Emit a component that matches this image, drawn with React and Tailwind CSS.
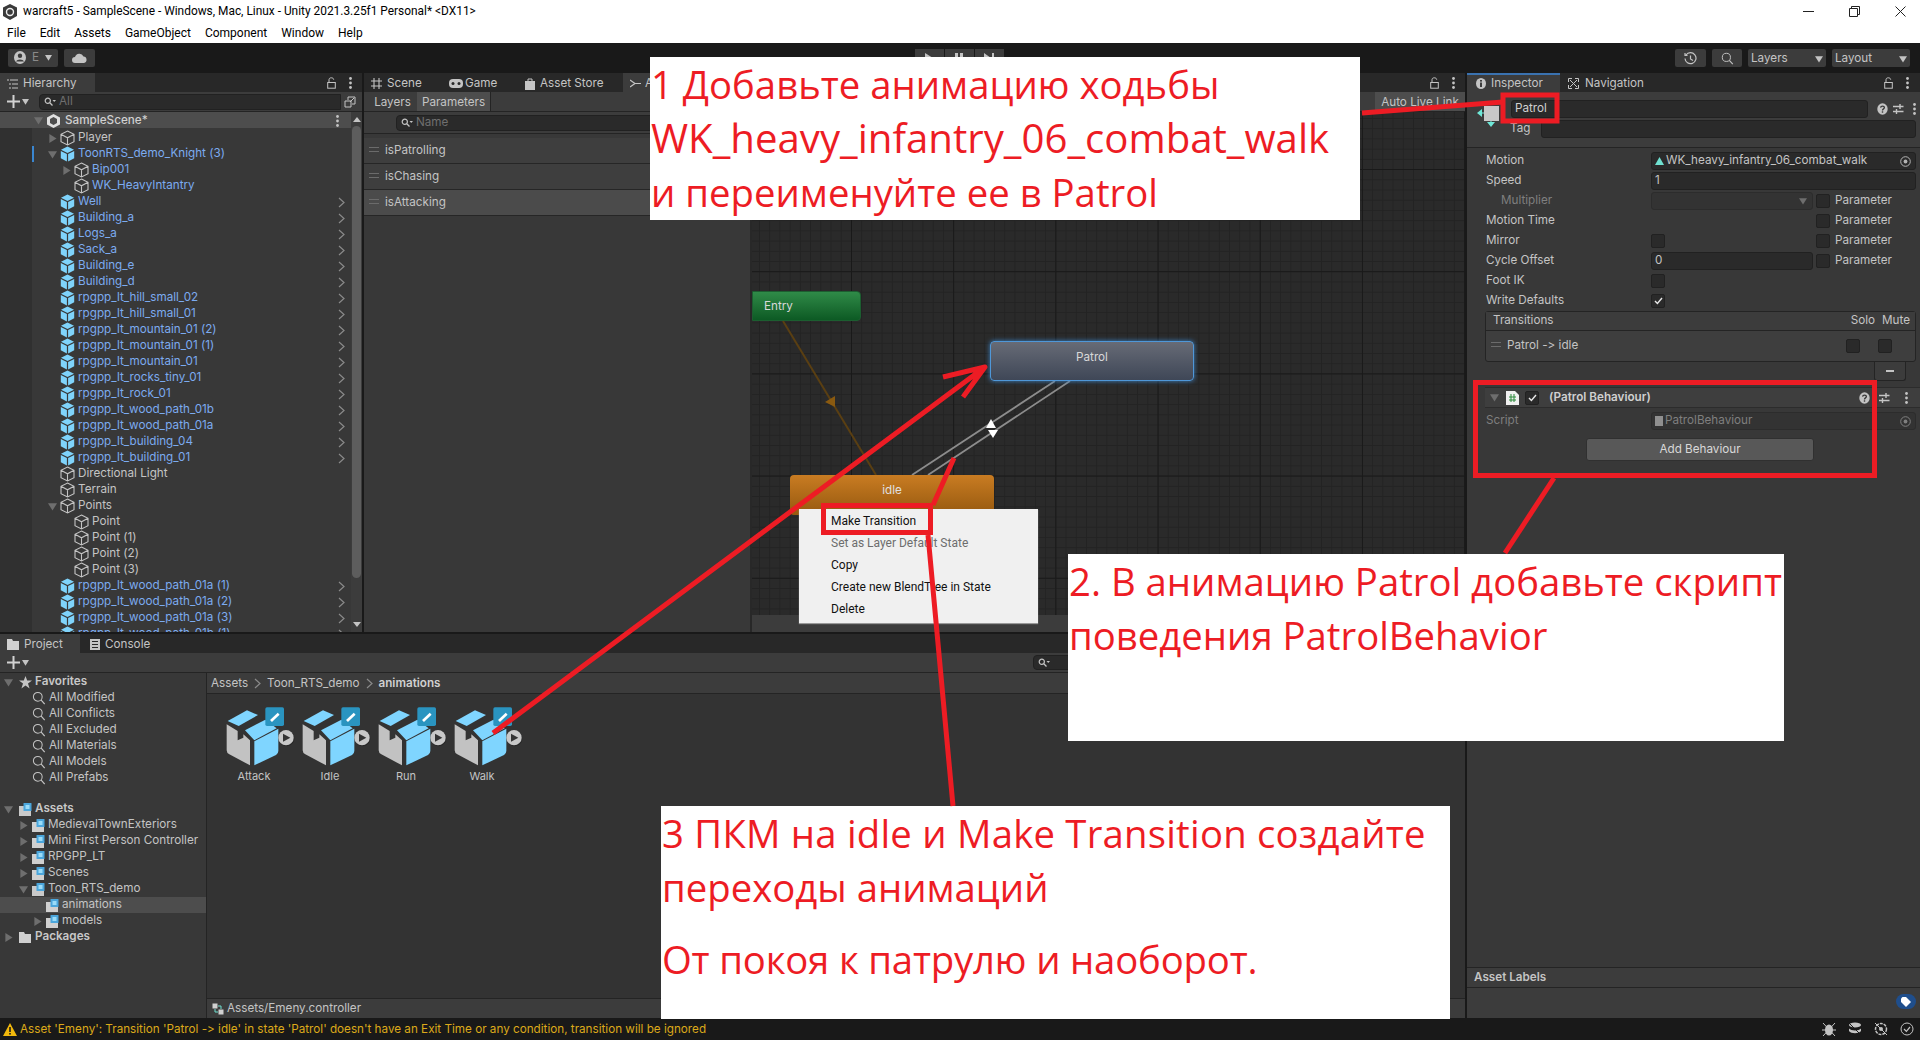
import React from "react";

const Tri = ({ dir = "d", c = "#6e6e6e", s = 10 }) => (
  <svg width={s} height={s} viewBox="0 0 10 10" className="shrink-0">
    <path d={dir === "d" ? "M0 1.5H10L5 9.5Z" : "M1.5 0L9.5 5L1.5 10Z"} fill={c} />
  </svg>
);
const Chev = () => (
  <svg width="7" height="11" viewBox="0 0 7 11" className="shrink-0"><path d="M1 1L6 5.5L1 10" fill="none" stroke="#8a8a8a" strokeWidth="1.2" /></svg>
);
const GoCube = () => (
  <svg width="15" height="16" viewBox="0 0 15 16" className="shrink-0">
    <path d="M7.5 1L14 4.3V11.7L7.5 15L1 11.7V4.3ZM1 4.3L7.5 7.8L14 4.3M7.5 7.8V15" fill="none" stroke="#c4c4c4" strokeWidth="1.1" />
  </svg>
);
const BlueCube = () => (
  <svg width="15" height="16" viewBox="0 0 15 16" className="shrink-0">
    <path d="M7.5 0.6L14 3.8L7.5 7.1L1 3.8Z" fill="#7fd3fb" />
    <path d="M0.8 5L6.9 8.1V15.6L0.8 12.3Z" fill="#7fd3fb" />
    <path d="M14.2 5L8.1 8.1V15.6L14.2 12.3Z" fill="#7fd3fb" />
  </svg>
);
const SearchI = ({ s = 15 }) => (
  <svg width={s} height={s} viewBox="0 0 15 15" className="shrink-0"><circle cx="6.2" cy="6.2" r="4.7" fill="none" stroke="#c4c4c4" strokeWidth="1.1" /><path d="M9.6 9.6L13.6 14" stroke="#c4c4c4" strokeWidth="1.3" /></svg>
);
const MiniSearch = () => (
  <svg width="12" height="10" viewBox="0 0 12 10" className="shrink-0"><circle cx="3.8" cy="3.8" r="2.6" fill="none" stroke="#c4c4c4" strokeWidth="1.2" /><path d="M5.8 5.8L8.5 8.5" stroke="#c4c4c4" strokeWidth="1.3" /><path d="M8.5 3H12L10.2 5Z" fill="#c4c4c4" /></svg>
);
const Lock = () => (
  <svg width="9" height="12" viewBox="0 0 9 12" className="shrink-0"><path d="M2 5V2.7C2 1.4 3.1.8 4.3.8S6.7 1.4 6.7 2.7" fill="none" stroke="#c4c4c4" strokeWidth="1" /><rect x="0.7" y="5.5" width="7.6" height="5.7" fill="none" stroke="#c4c4c4" strokeWidth="1" /></svg>
);
const Dots = () => (
  <svg width="3" height="12" viewBox="0 0 3 12" className="shrink-0"><circle cx="1.5" cy="1.5" r="1.4" fill="#c4c4c4" /><circle cx="1.5" cy="6" r="1.4" fill="#c4c4c4" /><circle cx="1.5" cy="10.5" r="1.4" fill="#c4c4c4" /></svg>
);
const Sliders = () => (
  <svg width="11" height="12" viewBox="0 0 11 12" className="shrink-0"><path d="M0 3.5H10.5M0 8.5H10.5M7 1V6M3.5 6V11" stroke="#c4c4c4" strokeWidth="1.4" fill="none" /></svg>
);
const Help = () => (
  <svg width="11" height="12" viewBox="0 0 11 12" className="shrink-0"><ellipse cx="5.5" cy="6" rx="5.2" ry="5.8" fill="#c4c4c4" /><path d="M3.6 4.6C3.8 2.7 7.4 2.7 7.4 4.6C7.4 6 5.5 5.8 5.5 7.4" fill="none" stroke="#383838" strokeWidth="1.3" /><rect x="4.8" y="8.3" width="1.4" height="1.4" fill="#383838" /></svg>
);
const Plus = () => (
  <div className="flex items-center gap-[2px]">
    <svg width="13" height="13" viewBox="0 0 13 13"><path d="M6.5 0V13M0 6.5H13" stroke="#d2d2d2" strokeWidth="2" /></svg>
    <Tri c="#c4c4c4" s={7} />
  </div>
);
const Handle = () => (
  <div className="flex flex-col gap-[3px] w-[10px] shrink-0 mb-[3px]"><div className="h-px bg-[#6b6b6b]" /><div className="h-px bg-[#6b6b6b]" /></div>
);
const Folder = ({ open }) => (
  <svg width="13" height="13" viewBox="0 0 13 13" className="shrink-0">
    <path d="M0 3H5V5H12V13H0Z" fill={open ? "#c9c9c9" : "#d0d0d0"} />
    <rect x="4.5" y="0" width="8" height="8" rx="0.5" fill="#4ba6dc" /><rect x="6.5" y="2" width="4" height="4" fill="#9adcf9" />
  </svg>
);
const PlainFolder = () => (
  <svg width="13" height="11" viewBox="0 0 13 11" className="shrink-0"><path d="M0 0H5L6 2H12V11H0Z" fill="#d0d0d0" /></svg>
);
const Check = () => (
  <svg width="9" height="8" viewBox="0 0 9 8"><path d="M1 4L3.4 6.5L8 1" fill="none" stroke="#e8e8e8" strokeWidth="1.4" /></svg>
);
const Box = ({ on }) => (
  <div className="w-[14px] h-[14px] rounded-[2px] bg-[#2a2a2a] border border-[#212121] flex items-center justify-center shrink-0">{on && <Check />}</div>
);
const Target = () => (
  <svg width="11" height="11" viewBox="0 0 11 11" className="shrink-0"><circle cx="5.5" cy="5.5" r="4.8" fill="none" stroke="#b4b4b4" /><circle cx="5.5" cy="5.5" r="1.9" fill="#b4b4b4" /></svg>
);

const Animation = ({ name }) => (
  <div className="w-[76px] flex flex-col items-start shrink-0">
    <svg width="70" height="60" viewBox="80 140 210 180">
      <path d="M85 182L143 150L176 164L118 197Z" fill="#7fd5ff" />
      <path d="M137 210L198 178L232 204L165 240Z" fill="#7fd5ff" />
      <path d="M165 243L237 205V272Q237 280 230 284L165 315Z" fill="#7fd5ff" />
      <path d="M82 192L115 212V240L132 232V222L152 240V315L90 282Q82 278 82 270Z" fill="#c2c2c2" />
      <rect x="198" y="141" width="56" height="56" rx="5" fill="#2a94c0" />
      <path d="M215 182L238 160" stroke="#fff" strokeWidth="8" />
      <circle cx="262" cy="235" r="23" fill="#1f1f1f" opacity="0.6" />
      <circle cx="260" cy="232" r="23" fill="#c8c8c8" />
      <path d="M251 220L273 232L251 244Z" fill="#333" />
    </svg>
    <div className="w-[56px] text-center text-[11px] leading-[14px] mt-[2px] text-[#c4c4c4]">{name}</div>
  </div>
);

const H = [
  ["Player", 0, "g", 0, "r", 0],
  ["ToonRTS_demo_Knight (3)", 0, "b", 1, "d", 0],
  ["Bip001", 1, "g", 1, "r", 0],
  ["WK_HeavyIntantry", 1, "g", 1, "", 0],
  ["Well", 0, "b", 1, "", 1],
  ["Building_a", 0, "b", 1, "", 1],
  ["Logs_a", 0, "b", 1, "", 1],
  ["Sack_a", 0, "b", 1, "", 1],
  ["Building_e", 0, "b", 1, "", 1],
  ["Building_d", 0, "b", 1, "", 1],
  ["rpgpp_lt_hill_small_02", 0, "b", 1, "", 1],
  ["rpgpp_lt_hill_small_01", 0, "b", 1, "", 1],
  ["rpgpp_lt_mountain_01 (2)", 0, "b", 1, "", 1],
  ["rpgpp_lt_mountain_01 (1)", 0, "b", 1, "", 1],
  ["rpgpp_lt_mountain_01", 0, "b", 1, "", 1],
  ["rpgpp_lt_rocks_tiny_01", 0, "b", 1, "", 1],
  ["rpgpp_lt_rock_01", 0, "b", 1, "", 1],
  ["rpgpp_lt_wood_path_01b", 0, "b", 1, "", 1],
  ["rpgpp_lt_wood_path_01a", 0, "b", 1, "", 1],
  ["rpgpp_lt_building_04", 0, "b", 1, "", 1],
  ["rpgpp_lt_building_01", 0, "b", 1, "", 1],
  ["Directional Light", 0, "g", 0, "", 0],
  ["Terrain", 0, "g", 0, "", 0],
  ["Points", 0, "g", 0, "d", 0],
  ["Point", 1, "g", 0, "", 0],
  ["Point (1)", 1, "g", 0, "", 0],
  ["Point (2)", 1, "g", 0, "", 0],
  ["Point (3)", 1, "g", 0, "", 0],
  ["rpgpp_lt_wood_path_01a (1)", 0, "b", 1, "", 1],
  ["rpgpp_lt_wood_path_01a (2)", 0, "b", 1, "", 1],
  ["rpgpp_lt_wood_path_01a (3)", 0, "b", 1, "", 1],
  ["rpgpp_lt_wood_path_01b (1)", 0, "b", 1, "", 1],
];

const HRow = ({ r, idx }) => {
  const [n, d, icon, blue, arrow, chev] = r;
  return (
    <div className={"h-[16px] flex items-center pr-[6px] shrink-0 " + (d ? "pl-[30px]" : "pl-[16px]") + (idx === 1 ? " shadow-[inset_2px_0_0_#3a86d0]" : "")}>
      <div className="w-[12px] shrink-0">{arrow && <Tri dir={arrow} s={9} />}</div>
      {icon === "b" ? <BlueCube /> : <GoCube />}
      <span className={"ml-[3px] whitespace-nowrap " + (blue ? "text-[#7cabf0]" : "text-[#c4c4c4]")}>{n}</span>
      {chev ? <div className="ml-auto"><Chev /></div> : null}
    </div>
  );
};

const Tree = ({ n, lvl, kind, arrow, sel, bold }) => (
  <div className={"h-[16px] flex items-center shrink-0 " + (sel ? "bg-[#4d4d4d] " : "") + (lvl === 0 ? "pl-[4px]" : lvl === 1 ? "pl-[19px]" : "pl-[33px]")}>
    <div className={lvl === 0 ? "w-[15px] shrink-0" : "w-[13px] shrink-0"}>{arrow && <Tri dir={arrow} s={9} />}</div>
    {kind === "s" ? <SearchI s={14} /> : kind === "f" ? <Folder /> : kind === "o" ? <Folder open /> : kind === "p" ? <PlainFolder /> : (
      <svg width="13" height="13" viewBox="0 0 13 13" className="shrink-0"><path d="M6.5 0L8.2 4.5H13L9 7.5L10.6 12.5L6.5 9.5L2.4 12.5L4 7.5L0 4.5H4.8Z" fill="#c4c4c4" /></svg>
    )}
    <span className={"ml-[3px] whitespace-nowrap " + (bold ? "font-semibold text-[#c8c8c8]" : "text-[#c4c4c4]")}>{n}</span>
  </div>
);

const Tab = ({ children, active, w }) => (
  <div className={"h-full flex items-center pl-[7px] pt-[2px] shrink-0 " + w + (active ? " bg-[#3c3c3c]" : "")}>{children}</div>
);

const Field = ({ children, w = "flex-1" }) => (
  <div className={"h-[18px] bg-[#2a2a2a] border border-[#212121] rounded-[3px] flex items-center px-[3px] " + w}>{children}</div>
);

const Param = () => (
  <div className="flex items-center gap-[5px] ml-[3px] w-[100px] shrink-0"><Box /><span className="text-[#c4c4c4]">Parameter</span></div>
);

const PropRow = ({ label, sub, dim, children, param }) => (
  <div className="h-[20px] flex items-center">
    <div className={"w-[165px] shrink-0 " + (sub ? "pl-[15px] " : "") + (dim ? "text-[#7f7f7f]" : "text-[#c4c4c4]")}>{label}</div>
    <div className="flex-1 flex items-center min-w-0">{children}</div>
    {param && <Param />}
  </div>
);

const Tool = ({ w, children }) => (
  <div className={"h-[18px] bg-[#3c3c3c] rounded-[2px] flex items-center justify-center shrink-0 " + w}>{children}</div>
);

const Callout = ({ cls, children }) => (
  <div className={"absolute bg-white text-[#ed1c24] text-[38.3px] leading-[54px] whitespace-nowrap font-['Open_Sans',sans-serif] " + cls}>{children}</div>
);

export default function App() {
  return (
    <div className="relative w-[1920px] h-[1040px] overflow-hidden flex flex-col bg-[#191919] text-[11.7px] text-[#c4c4c4] font-['Inter',sans-serif] [font-variant-ligatures:none] [font-feature-settings:'calt'_0,'liga'_0]">
      {/* title */}
      <div className="h-[22px] bg-white flex items-center pl-[3px] pt-px shrink-0 text-black text-[11.9px] font-['Roboto',sans-serif]">
        <svg width="14" height="16" viewBox="0 0 14 16" className="shrink-0"><path d="M7 0L14 3.5V12L7 16L0 12V3.5Z" fill="#3a3a3a" /><circle cx="7" cy="8" r="3.5" fill="none" stroke="#eee" strokeWidth="1.4" /></svg>
        <span className="ml-[6px]">warcraft5 - SampleScene - Windows, Mac, Linux - Unity 2021.3.25f1 Personal* &lt;DX11&gt;</span>
        <div className="ml-auto flex items-center gap-[35px] pr-[14px]">
          <svg width="11" height="11" viewBox="0 0 11 11"><path d="M0 5.5H11" stroke="#222" /></svg>
          <svg width="11" height="11" viewBox="0 0 11 11"><path d="M2.5 2.5V.5H10.5V8.5H8.5M.5 2.5H8.5V10.5H.5Z" fill="none" stroke="#222" /></svg>
          <svg width="11" height="11" viewBox="0 0 11 11"><path d="M.5.5L10.5 10.5M10.5.5L.5 10.5" stroke="#222" /></svg>
        </div>
      </div>
      {/* menu */}
      <div className="h-[21px] bg-white flex items-center pl-[7px] gap-[14px] shrink-0 text-black text-[12px] font-['Roboto',sans-serif]">
        {["File", "Edit", "Assets", "GameObject", "Component", "Window", "Help"].map((m) => <span key={m}>{m}</span>)}
      </div>
      {/* toolbar */}
      <div className="h-[30px] flex items-center pl-[8px] pr-[10px] shrink-0">
        <div className="flex-1 flex items-center gap-[6px]">
          <Tool w="w-[50px]">
            <div className="flex items-center gap-[6px]">
              <svg width="12" height="13" viewBox="0 0 12 13"><ellipse cx="6" cy="6.5" rx="6" ry="6.5" fill="#c4c4c4" /><circle cx="6" cy="4.8" r="2.2" fill="#3c3c3c" /><path d="M2 10.5C3 7.8 9 7.8 10 10.5" fill="#3c3c3c" /></svg>
              <span className="text-[#8a8a8a]">E</span><Tri c="#c4c4c4" s={7} />
            </div>
          </Tool>
          <Tool w="w-[31px]"><svg width="15" height="10" viewBox="0 0 15 10"><path d="M3 10A3 3 0 0 1 3 4A4.5 4.5 0 0 1 11.5 3.5A3.3 3.3 0 0 1 12 10Z" fill="#c4c4c4" /></svg></Tool>
        </div>
        <div className="flex items-center gap-px">
          {[0, 1, 2].map((i) => (
            <div key={i} className="w-[29px] h-[18px] bg-[#3c3c3c] flex items-center justify-center">
              {i === 0 && <svg width="8" height="10" viewBox="0 0 8 10"><path d="M0 0L8 5L0 10Z" fill="#c4c4c4" /></svg>}
              {i === 1 && <svg width="8" height="10" viewBox="0 0 8 10"><path d="M0 0H3V10H0ZM5 0H8V10H5Z" fill="#c4c4c4" /></svg>}
              {i === 2 && <svg width="10" height="10" viewBox="0 0 10 10"><path d="M0 0L7 5L0 10ZM8 0H10V10H8Z" fill="#c4c4c4" /></svg>}
            </div>
          ))}
        </div>
        <div className="flex-1 flex items-center justify-end gap-[6px]">
          <Tool w="w-[31px]"><svg width="13" height="13" viewBox="0 0 13 13"><path d="M2 3A5.5 5.5 0 1 1 1 6.5M1 1V3.5H3.5M6.5 3.5V7L9 8.5" fill="none" stroke="#c4c4c4" strokeWidth="1.2" /></svg></Tool>
          <Tool w="w-[30px]"><SearchI s={13} /></Tool>
          <Tool w="w-[78px]"><div className="flex items-center justify-between w-full px-[3px] pt-px"><span>Layers</span><Tri c="#c4c4c4" s={8} /></div></Tool>
          <Tool w="w-[78px]"><div className="flex items-center justify-between w-full px-[3px] pt-px"><span>Layout</span><Tri c="#c4c4c4" s={8} /></div></Tool>
        </div>
      </div>

      {/* main */}
      <div className="flex-1 min-h-0 flex gap-[2px]">
        <div className="w-[1465px] shrink-0 flex flex-col gap-[2px]">
          <div className="h-[559px] shrink-0 flex gap-[2px]">
            {/* hierarchy */}
            <div className="w-[362px] shrink-0 flex flex-col bg-[#383838] overflow-hidden">
              <div className="h-[19px] shrink-0 bg-[#282828] flex items-center pr-[10px]">
                <Tab active w="w-[95px] gap-[5px]">
                  <svg width="11" height="10" viewBox="0 0 11 10"><path d="M0 1H2M3 1H11M2 5H4M5 5H11M2 9H4M5 9H11" stroke="#c4c4c4" /></svg>
                  <span>Hierarchy</span>
                </Tab>
                <div className="ml-auto flex items-center gap-[13px]"><Lock /><Dots /></div>
              </div>
              <div className="h-[20px] shrink-0 bg-[#3c3c3c] border-b border-[#242424] flex items-center pl-[7px] pr-[4px]">
                <Plus />
                <div className="ml-[10px] flex-1 h-[16px] bg-[#2a2a2a] border border-[#212121] rounded-l-[4px] flex items-center pl-[4px] gap-[3px]">
                  <MiniSearch /><span className="text-[#6f6f6f]">All</span>
                </div>
                <div className="w-[16px] h-[16px] flex items-center justify-center ml-[1px]">
                  <svg width="12" height="12" viewBox="0 0 12 12"><path d="M1 5V11H7V5ZM4 4V1H11V8H8M6 6L10 2" fill="none" stroke="#c4c4c4" /></svg>
                </div>
              </div>
              <div className="flex-1 min-h-0 flex">
                <div className="flex-1 min-w-0 flex flex-col">
                  <div className="h-[16px] shrink-0 bg-[#4d4d4d] flex items-center pl-[34px] pr-[12px] pt-px">
                    <Tri s={9} />
                    <svg width="13" height="14" viewBox="0 0 13 14" className="ml-[4px]"><path d="M6.5 0L13 3.5V10.5L6.5 14L0 10.5V3.5Z" fill="#e0e0e0" /><path d="M6.5 3L10 5V9L6.5 11L3 9V5Z" fill="#4d4d4d" /></svg>
                    <span className="ml-[5px] font-medium text-[#d0d0d0]">SampleScene*</span>
                    <div className="ml-auto"><Dots /></div>
                  </div>
                  <div className="flex-1 min-h-0 flex overflow-hidden">
                    <div className="w-[32px] shrink-0 bg-[#303030]" />
                    <div className="flex-1 min-w-0 flex flex-col pt-[2px] overflow-hidden">
                      {H.map((r, i) => <HRow key={r[0]} r={r} idx={i} />)}
                    </div>
                  </div>
                </div>
                <div className="w-[11px] shrink-0 bg-[#3c3c3c] flex flex-col items-center pt-[5px] pb-[5px]">
                  <svg width="8" height="5" viewBox="0 0 8 5" className="shrink-0"><path d="M0 5H8L4 0Z" fill="#c4c4c4" /></svg>
                  <div className="w-[9px] h-[452px] mt-[4px] rounded-full bg-[#5d5d5d]" />
                  <svg width="8" height="5" viewBox="0 0 8 5" className="mt-auto shrink-0"><path d="M0 0H8L4 5Z" fill="#c4c4c4" /></svg>
                </div>
              </div>
            </div>
            {/* animator */}
            <div className="flex-1 min-w-0 flex flex-col">
              <div className="h-[19px] shrink-0 bg-[#282828] flex items-center pr-[10px]">
                <Tab w="w-[78px] gap-[5px]">
                  <svg width="11" height="11" viewBox="0 0 11 11"><path d="M3 0V11M8 0V11M0 3H11M0 8H11" stroke="#c4c4c4" strokeWidth="1.1" /></svg>
                  <span>Scene</span>
                </Tab>
                <Tab w="w-[76px] gap-[2px]">
                  <svg width="14" height="9" viewBox="0 0 14 9"><rect width="14" height="9" rx="4" fill="#c4c4c4" /><circle cx="4" cy="4.5" r="1.5" fill="#282828" /><circle cx="10" cy="4.5" r="1.5" fill="#282828" /></svg>
                  <span>Game</span>
                </Tab>
                <Tab w="w-[105px] gap-[5px]">
                  <svg width="10" height="12" viewBox="0 0 10 12"><path d="M0 3H10V12H0Z" fill="#c4c4c4" /><path d="M3 3V1H7V3" fill="none" stroke="#c4c4c4" /></svg>
                  <span>Asset Store</span>
                </Tab>
                <Tab active w="w-[720px] gap-[4px]">
                  <svg width="11" height="11" viewBox="0 0 11 11"><path d="M0 2L5 5.5L0 9M5 5.5H11" fill="none" stroke="#c4c4c4" strokeWidth="1.2" /></svg>
                  <span>Animator</span>
                </Tab>
                <div className="ml-auto flex items-center gap-[13px]"><Lock /><Dots /></div>
              </div>
              <div className="flex-1 min-h-0 flex">
                <div className="w-[388px] shrink-0 bg-[#383838] flex flex-col border-r-2 border-[#282828]">
                  <div className="h-[20px] shrink-0 bg-[#3c3c3c] border-b border-[#242424] flex items-stretch pl-[4px]">
                    <div className="w-[49px] flex items-center justify-center pt-[2px]">Layers</div>
                    <div className="w-[74px] flex items-center justify-center pt-[2px] bg-[#4d4d4d] border-r border-[#242424]">Parameters</div>
                  </div>
                  <div className="h-[22px] shrink-0 border-b border-[#242424] flex items-center pl-[32px] bg-[#3c3c3c]">
                    <div className="w-[300px] h-[16px] bg-[#2a2a2a] border border-[#212121] rounded-[4px] flex items-center pl-[4px] gap-[3px] pt-px">
                      <MiniSearch /><span className="text-[#6f6f6f]">Name</span>
                    </div>
                  </div>
                  <div className="h-[4px] shrink-0" />
                  {["isPatrolling", "isChasing", "isAttacking"].map((p, i) => (
                    <div key={p} className={"h-[26px] shrink-0 border-b border-[#262626] flex items-center pl-[5px] gap-[6px] " + (i === 2 ? "bg-[#4b4b4b]" : "bg-[#3e3e3e]")}>
                      <Handle /><span className="text-[#c4c4c4]">{p}</span>
                    </div>
                  ))}
                </div>
                <div className="relative flex-1 min-w-0 bg-[#2a2a2a] overflow-hidden flex flex-col">
                  <div className="h-[20px] shrink-0 bg-[#3c3c3c] flex justify-end border-b border-[#242424]">
                    <div className="w-[90px] bg-[#4d4d4d] flex items-center justify-center pt-[3px] text-[#c4c4c4]">Auto Live Link</div>
                  </div>
                  <div className="flex-1 min-h-0 [background-image:linear-gradient(#191919_1px,transparent_1px),linear-gradient(90deg,#191919_1px,transparent_1px),linear-gradient(#232323_1px,transparent_1px),linear-gradient(90deg,#232323_1px,transparent_1px)] [background-size:102.2px_102.2px,102.2px_102.2px,10.22px_10.22px,10.22px_10.22px] [background-position:0_57px,99px_0,0_6px,7px_0]" />
                  <div className="h-[17px] shrink-0 bg-[#3c3c3c]" />
                  <svg className="absolute left-0 top-[20px]" width="713" height="520" viewBox="752 112 713 520">
                    <path d="M783 321L876 475" stroke="#5a3f12" strokeWidth="2" />
                    <path d="M825 402L835 396L835 407Z" fill="#8a5a10" />
                    <path d="M912 475L1055 381M928 475L1070 381" stroke="#8c8c8c" strokeWidth="1.8" />
                    <path d="M986 428L991 419L996 428Z" fill="#fff" />
                    <path d="M988 430L998 430L993 438Z" fill="#fff" />
                  </svg>
                  <div className="absolute left-0 top-[199px] w-[109px] h-[30px] rounded-r-[4px] bg-gradient-to-b from-[#2f8b48] to-[#0c5a24] border border-[#1c5e30] flex items-center pl-[11px] pt-px text-[#d8d8d8]">Entry</div>
                  <div className="absolute left-[238px] top-[249px] w-[204px] h-[40px] rounded-[4px] bg-gradient-to-b from-[#676b76] to-[#3f4757] border border-[#4f97d8] shadow-[0_0_5px_#3c82c4] flex justify-center pt-[7px] text-[#d8d8d8]">Patrol</div>
                  <div className="absolute left-[38px] top-[383px] w-[204px] h-[40px] rounded-[4px] bg-gradient-to-b from-[#c97c22] to-[#96590f] flex justify-center pt-[7px] text-[#e0e0e0]">idle</div>
                  <div className="absolute left-[47px] top-[417px] w-[239px] h-[114px] bg-[#f0f0f0] shadow-[0_1px_1px_#999] flex flex-col pt-px pl-[32px] font-['Roboto',sans-serif] text-[#111] text-[12px]">
                    {["Make Transition", "Set as Layer Default State", "Copy", "Create new BlendTree in State", "Delete"].map((m, i) => (
                      <div key={m} className={"h-[22px] flex items-center " + (i === 1 ? "text-[#6d6d6d]" : "")}>{m}</div>
                    ))}
                  </div>
                </div>
              </div>
            </div>
          </div>

          {/* project */}
          <div className="flex-1 min-h-0 flex flex-col bg-[#383838]">
            <div className="h-[19px] shrink-0 bg-[#282828] flex items-center">
              <Tab active w="w-[80px] gap-[4px]"><PlainFolder /><span>Project</span></Tab>
              <Tab w="w-[90px] gap-[5px]">
                <svg width="10" height="11" viewBox="0 0 10 11" className="ml-[3px]"><path d="M0 0H10V11H0Z" fill="#c4c4c4" /><path d="M2 2.5H8M2 5.5H8M2 8.5H8" stroke="#282828" /></svg>
                <span>Console</span>
              </Tab>
            </div>
            <div className="h-[20px] shrink-0 bg-[#3c3c3c] border-b border-[#242424] flex items-center pl-[7px]">
              <Plus />
              <div className="ml-auto w-[432px] h-[15px] bg-[#2a2a2a] border border-[#212121] rounded-[4px] flex items-center pl-[4px]"><MiniSearch /></div>
            </div>
            <div className="flex-1 min-h-0 flex">
              <div className="w-[207px] shrink-0 border-r border-[#242424] pt-px flex flex-col">
                <Tree n="Favorites" lvl={0} kind="st" arrow="d" bold />
                {["All Modified", "All Conflicts", "All Excluded", "All Materials", "All Models", "All Prefabs"].map((n) => <Tree key={n} n={n} lvl={1} kind="s" />)}
                <div className="h-[15px] shrink-0" />
                <Tree n="Assets" lvl={0} kind="o" arrow="d" bold />
                <Tree n="MedievalTownExteriors" lvl={1} kind="f" arrow="r" />
                <Tree n="Mini First Person Controller" lvl={1} kind="f" arrow="r" />
                <Tree n="RPGPP_LT" lvl={1} kind="f" arrow="r" />
                <Tree n="Scenes" lvl={1} kind="f" arrow="r" />
                <Tree n="Toon_RTS_demo" lvl={1} kind="o" arrow="d" />
                <Tree n="animations" lvl={2} kind="f" sel />
                <Tree n="models" lvl={2} kind="f" arrow="r" />
                <Tree n="Packages" lvl={0} kind="p" arrow="r" bold />
              </div>
              <div className="flex-1 min-w-0 flex flex-col bg-[#333333]">
                <div className="h-[21px] shrink-0 bg-[#3c3c3c] border-b border-[#242424] flex items-center pl-[4px] pt-px gap-[6px]">
                  <span>Assets</span><Chev /><span>Toon_RTS_demo</span><Chev /><span className="font-semibold text-[#d0d0d0]">animations</span>
                </div>
                <div className="flex-1 min-h-0 flex items-start pt-[13px] pl-[19px]">
                  {["Attack", "Idle", "Run", "Walk"].map((n) => <Animation key={n} name={n} />)}
                </div>
                <div className="h-[20px] shrink-0 bg-[#3c3c3c] border-t border-[#242424] flex items-center pl-[5px] gap-[3px]">
                  <svg width="12" height="12" viewBox="0 0 12 12"><rect x="0.5" y="0.5" width="5" height="5" fill="#d0d0d0" /><rect x="6.5" y="6.5" width="5" height="5" fill="#d0d0d0" /><path d="M3 6V9H6M6 3H9V6" fill="none" stroke="#6fe0d0" /></svg>
                  <span>Assets/Emeny.controller</span>
                </div>
              </div>
            </div>
          </div>
        </div>

        {/* inspector */}
        <div className="flex-1 min-w-0 flex flex-col bg-[#383838]">
          <div className="h-[19px] shrink-0 bg-[#282828] flex items-center pr-[11px]">
            <div className="w-[93px] h-full bg-[#3c3c3c] border-t-2 border-[#3a72b0] flex items-center pl-[9px] gap-[5px]">
              <svg width="10" height="11" viewBox="0 0 10 11"><ellipse cx="5" cy="5.5" rx="5" ry="5.5" fill="#c4c4c4" /><rect x="4" y="4.5" width="2" height="4.5" fill="#3c3c3c" /><rect x="4" y="2" width="2" height="1.6" fill="#3c3c3c" /></svg>
              <span>Inspector</span>
            </div>
            <div className="ml-[8px] flex items-center gap-[6px] pt-[2px]">
              <svg width="11" height="11" viewBox="0 0 11 11"><path d="M.5.5H4M7 .5H10.5V4M10.5 7V10.5H7M4 10.5H.5V7M.5 4V.5M2 2L9 9M9 2L2 9" fill="none" stroke="#c4c4c4" /></svg>
              <span>Navigation</span>
            </div>
            <div className="ml-auto flex items-center gap-[13px]"><Lock /><Dots /></div>
          </div>
          <div className="h-[56px] shrink-0 border-b border-[#242424] bg-[#3c3c3c] flex flex-col pl-[10px] pr-[4px] pt-[7px]">
            <div className="flex items-center h-[19px]">
              <svg width="22" height="24" viewBox="0 0 22 24" className="shrink-0 mt-[13px]"><rect x="7" y="3" width="15" height="15" fill="#c8c8c8" /><path d="M0 10L5 6V14ZM14 24L10 19H18Z M3 9.5H7V10.5H3Z M13.5 18H14.5V21H13.5Z" fill="#6fe8d8" /></svg>
              <div className="ml-[12px] w-[357px] h-[18px] bg-[#2a2a2a] border border-[#212121] rounded-[3px] flex items-center pl-[3px] pt-px text-[#d0d0d0]">Patrol</div>
              <div className="ml-auto flex items-center gap-[5px]"><Help /><Sliders /><div className="ml-[4px]"><Dots /></div></div>
            </div>
            <div className="flex items-center h-[19px] mt-px">
              <span className="ml-[33px] w-[31px] pt-px text-[#c4c4c4]">Tag</span>
              <div className="flex-1 h-[18px] bg-[#2a2a2a] border border-[#212121] rounded-[3px]" />
            </div>
          </div>
          <div className="pl-[19px] pr-[4px] pt-[3px] shrink-0">
            <PropRow label="Motion">
              <Field>
                <svg width="9" height="8" viewBox="0 0 9 8" className="mr-[2px] shrink-0"><path d="M4.5 0L9 8H0Z" fill="#6fe0d0" /></svg>
                <span className="whitespace-nowrap">WK_heavy_infantry_06_combat_walk</span>
                <div className="ml-auto mr-[1px]"><Target /></div>
              </Field>
            </PropRow>
            <PropRow label="Speed"><Field>1</Field></PropRow>
            <PropRow label="Multiplier" sub dim param>
              <div className="flex-1 h-[18px] bg-[#333] border border-[#2c2c2c] rounded-[3px] flex items-center justify-end pr-[5px]"><Tri c="#6e6e6e" s={8} /></div>
            </PropRow>
            <PropRow label="Motion Time" param />
            <PropRow label="Mirror" param><Box /></PropRow>
            <PropRow label="Cycle Offset" param><Field>0</Field></PropRow>
            <PropRow label="Foot IK"><Box /></PropRow>
            <PropRow label="Write Defaults"><Box on /></PropRow>
          </div>
          <div className="ml-[18px] mr-[4px] shrink-0 flex flex-col items-stretch">
            <div className="border border-[#242424] rounded-[3px] bg-[#3e3e3e]">
              <div className="h-[19px] border-b border-[#242424] bg-[#3c3c3c] flex items-center pl-[7px] pr-[5px]">
                <span>Transitions</span>
                <span className="ml-auto">Solo</span><span className="ml-[7px]">Mute</span>
              </div>
              <div className="h-[30px] flex items-center pl-[5px]">
                <Handle /><span className="ml-[6px]">Patrol -&gt; idle</span>
                <div className="ml-auto flex items-center gap-[18px] pr-[23px]"><Box /><Box /></div>
              </div>
            </div>
            <div className="self-end mr-[10px] w-[32px] h-[19px] bg-[#3c3c3c] border border-t-0 border-[#242424] rounded-b-[3px] flex items-center justify-center">
              <div className="w-[8px] h-[2px] bg-[#c4c4c4]" />
            </div>
          </div>
          <div className="mt-[6px] h-[21px] shrink-0 ml-[18px] bg-[#3e3e3e] border-y border-[#2c2c2c] flex items-center pl-[5px] pr-[12px]">
            <Tri s={9} />
            <svg width="13" height="14" viewBox="0 0 13 14" className="ml-[7px]"><path d="M0 0H9L13 4V14H0Z" fill="#f0f0f0" /><path d="M5 3V11M8 3V11M3 6H10M3 9H10" stroke="#2a8a3a" /></svg>
            <div className="ml-[6px]"><Box on /></div>
            <span className="ml-[10px] font-semibold text-[#d0d0d0]">(Patrol Behaviour)</span>
            <div className="ml-auto flex items-center gap-[9px]"><Help /><Sliders /><div className="ml-[6px]"><Dots /></div></div>
          </div>
          <div className="pl-[19px] pr-[4px] mt-[3px] shrink-0">
            <PropRow label="Script" dim>
              <div className="flex-1 h-[18px] bg-[#333] border border-[#2c2c2c] rounded-[3px] flex items-center px-[3px] text-[#7f7f7f]">
                <svg width="8" height="10" viewBox="0 0 8 10" className="mr-[2px]"><path d="M0 0H8V10H0Z" fill="#8f8f8f" /></svg>
                <span>PatrolBehaviour</span>
                <div className="ml-auto mr-[1px] opacity-60"><Target /></div>
              </div>
            </PropRow>
          </div>
          <div className="mt-[7px] self-start ml-[119px] w-[228px] h-[23px] bg-[#585858] border border-[#303030] rounded-[3px] flex items-center justify-center text-[#d8d8d8] shrink-0">Add Behaviour</div>
          <div className="flex-1 min-h-0" />
          <div className="h-[21px] shrink-0 bg-[#3c3c3c] border-y border-[#242424] flex items-center pl-[7px] pt-px font-semibold">Asset Labels</div>
          <div className="h-[30px] shrink-0 bg-[#3c3c3c] flex justify-end items-start pt-[6px] pr-[4px]">
            <div className="w-[20px] h-[15px] rounded-full bg-[#1f4e8c] flex items-center justify-center">
              <svg width="10" height="10" viewBox="0 0 10 10"><path d="M0 1.5L1.5 0H5L10 5L5 10L0 5Z" fill="#fff" /></svg>
            </div>
          </div>
        </div>
      </div>

      {/* status */}
      <div className="h-[22px] shrink-0 bg-[#191919] flex items-center pl-[3px] pr-[6px]">
        <svg width="14" height="13" viewBox="0 0 14 13" className="shrink-0"><path d="M7 0L14 13H0Z" fill="#f2b90c" /><rect x="6.2" y="4" width="1.6" height="5" fill="#191919" /><rect x="6.2" y="10" width="1.6" height="1.6" fill="#191919" /></svg>
        <span className="ml-[3px] pt-px text-[#dca91a] whitespace-nowrap">Asset 'Emeny': Transition 'Patrol -&gt; idle' in state 'Patrol' doesn't have an Exit Time or any condition, transition will be ignored</span>
        <div className="ml-auto flex items-center gap-[12px]">
          <svg width="14" height="15" viewBox="0 0 14 15"><ellipse cx="7" cy="8" rx="4" ry="5.5" fill="#c4c4c4" /><path d="M1 1L13 14M13 1L1 14M0 8H14" stroke="#c4c4c4" /></svg>
          <svg width="14" height="14" viewBox="0 0 14 14"><ellipse cx="7" cy="3" rx="6" ry="2.5" fill="#c4c4c4" /><path d="M1 6.5C3 9 11 9 13 6.5V9C11 12 3 12 1 9Z" fill="#c4c4c4" /><path d="M1 1L13 13" stroke="#191919" /></svg>
          <svg width="14" height="14" viewBox="0 0 14 14"><circle cx="7" cy="7" r="5.5" fill="none" stroke="#c4c4c4" strokeWidth="1.5" strokeDasharray="3 1" /><circle cx="7" cy="7" r="2" fill="#c4c4c4" /><path d="M1 1L13 13" stroke="#c4c4c4" /></svg>
          <svg width="14" height="14" viewBox="0 0 14 14"><circle cx="7" cy="7" r="6" fill="none" stroke="#c4c4c4" /><path d="M4 7L6.4 9.4L10 5" fill="none" stroke="#c4c4c4" strokeWidth="1.2" /></svg>
        </div>
      </div>

      {/* annotations */}
      <Callout cls="left-[650px] top-[57px] w-[710px] h-[163px] pl-[1px]">
        <div>1 Добавьте анимацию ходьбы</div>
        <div className="text-[40.2px]">WK_heavy_infantry_06_combat_walk</div>
        <div>и переименуйте ее в Patrol</div>
      </Callout>
      <Callout cls="left-[1068px] top-[554px] w-[716px] h-[187px] pl-[1px]">
        <div>2. В анимацию Patrol добавьте скрипт</div>
        <div>поведения PatrolBehavior</div>
      </Callout>
      <Callout cls="left-[661px] top-[806px] w-[789px] h-[213px] pl-[1px]">
        <div className="tracking-[0.22px]">3 ПКМ на idle и Make Transition создайте</div>
        <div>переходы анимаций</div>
        <div className="mt-[18px] tracking-[-0.18px]">От покоя к патрулю и наоборот.</div>
      </Callout>
      <svg className="absolute left-0 top-0 pointer-events-none" width="1920" height="1040" viewBox="0 0 1920 1040">
        <g fill="none" stroke="#ed1c24" strokeWidth="5">
          <path d="M493 733L985 367M943 377L985 367L963 397" strokeLinejoin="round" />
          <path d="M1362 113L1503 102" />
          <rect x="1503" y="95" width="54" height="26" strokeWidth="5" />
          <rect x="1475.5" y="382.5" width="399" height="93" strokeWidth="5" />
          <path d="M1554 478L1505 553" />
          <rect x="823.5" y="505.5" width="107" height="27" strokeWidth="5" />
          <path d="M933 505L954 458M928 535L953 806" />
        </g>
      </svg>
    </div>
  );
}
